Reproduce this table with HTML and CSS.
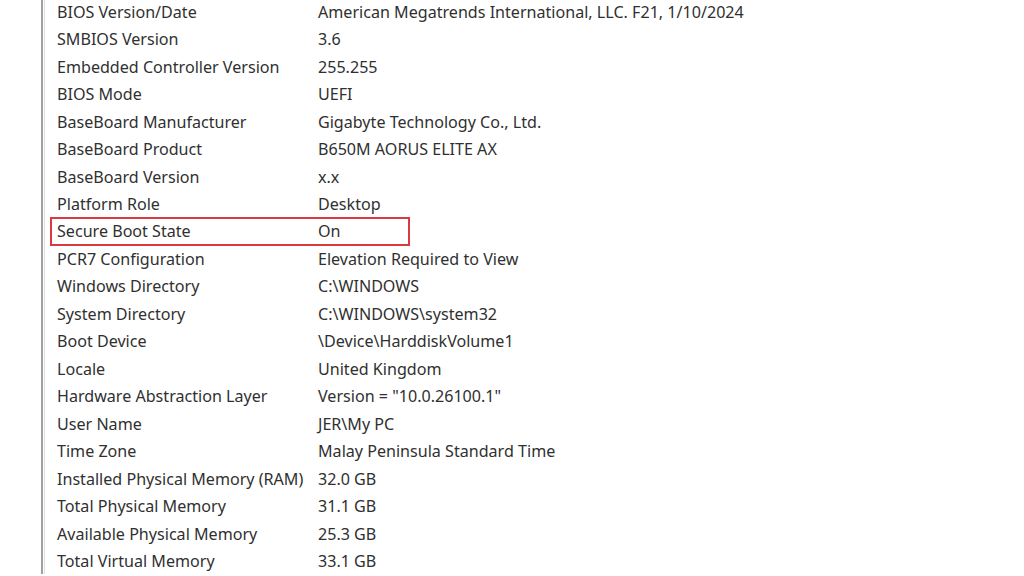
FILE: index.html
```html
<!DOCTYPE html>
<html lang="en">
<head>
  <meta charset="UTF-8">
  <title>System Information</title>
  <link rel="stylesheet" href="styles.css">
</head>
<body>

<div class="pane">
  <div class="inner">
    <div class="list">
      <div class="row"><span class="item">BIOS Version/Date</span><span class="value">American Megatrends International, LLC. F21, 1/10/2024</span></div>
      <div class="row"><span class="item">SMBIOS Version</span><span class="value">3.6</span></div>
      <div class="row"><span class="item">Embedded Controller Version</span><span class="value">255.255</span></div>
      <div class="row"><span class="item">BIOS Mode</span><span class="value">UEFI</span></div>
      <div class="row"><span class="item">BaseBoard Manufacturer</span><span class="value">Gigabyte Technology Co., Ltd.</span></div>
      <div class="row"><span class="item">BaseBoard Product</span><span class="value">B650M AORUS ELITE AX</span></div>
      <div class="row"><span class="item">BaseBoard Version</span><span class="value">x.x</span></div>
      <div class="row"><span class="item">Platform Role</span><span class="value">Desktop</span></div>
      <div class="row marked"><span class="item">Secure Boot State</span><span class="value">On</span></div>
      <div class="row"><span class="item">PCR7 Configuration</span><span class="value">Elevation Required to View</span></div>
      <div class="row"><span class="item">Windows Directory</span><span class="value">C:\WINDOWS</span></div>
      <div class="row"><span class="item">System Directory</span><span class="value">C:\WINDOWS\system32</span></div>
      <div class="row"><span class="item">Boot Device</span><span class="value">\Device\HarddiskVolume1</span></div>
      <div class="row"><span class="item">Locale</span><span class="value">United Kingdom</span></div>
      <div class="row"><span class="item">Hardware Abstraction Layer</span><span class="value">Version = "10.0.26100.1"</span></div>
      <div class="row"><span class="item">User Name</span><span class="value">JER\My PC</span></div>
      <div class="row"><span class="item">Time Zone</span><span class="value">Malay Peninsula Standard Time</span></div>
      <div class="row"><span class="item">Installed Physical Memory (RAM)</span><span class="value">32.0 GB</span></div>
      <div class="row"><span class="item">Total Physical Memory</span><span class="value">31.1 GB</span></div>
      <div class="row"><span class="item">Available Physical Memory</span><span class="value">25.3 GB</span></div>
      <div class="row"><span class="item">Total Virtual Memory</span><span class="value">33.1 GB</span></div>
    </div>
  </div>
</div>

</body>
</html>
```

FILE: styles.css
```css
html, body {
  height: 100%;
}
body {
  margin: 0;
  background: #fff;
  color: #303030;
  font-family: 'Noto Sans', 'Open Sans', sans-serif;
  font-size: 16.1px;
  overflow: hidden;
}
.pane {
  margin-left: 41px;
  height: 100%;
  border-left: 2px solid #a0a0a0;
}
.inner {
  margin-left: 1px;
  height: 100%;
  border-left: 1px solid #dedede;
}
.list {
  padding-left: 12px;
  margin-top: -2px;
}
.row {
  display: flex;
  height: 27.47px;
  align-items: center;
  white-space: nowrap;
}
.item {
  width: 261px;
  flex-shrink: 0;
}
.marked {
  position: relative;
}
.marked::after {
  content: "";
  position: absolute;
  left: -7px;
  top: -1px;
  width: 356px;
  height: 25px;
  border: 2px solid #d9393f;
}
```
